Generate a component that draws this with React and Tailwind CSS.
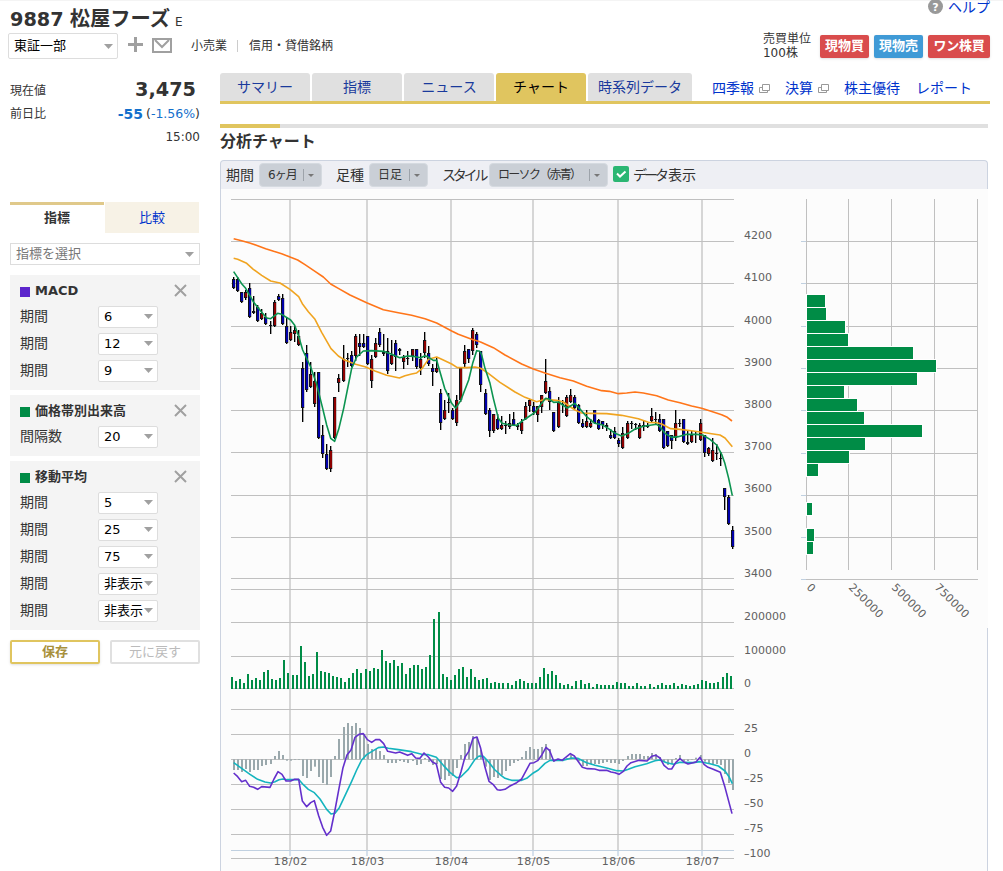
import React, { useState } from "react"

// [high, body top, body bottom, low, colour] in thirds of a pixel
const EARLY_CANDLES = [
    [247, 252, 280, 282, "b"], [247, 252, 287, 290, "b"], [290, 291, 321, 323, "b"], [284, 292, 309, 315, "r"],
    [265, 280, 366, 368, "b"], [303, 348, 355, 357, "r"], [331, 337, 378, 381, "b"], [343, 355, 373, 376, "r"],
    [355, 368, 388, 391, "b"], [378, 392, 394, 416, "k"], [316, 322, 394, 396, "r"], [297, 304, 316, 319, "b"],
    [297, 310, 387, 389, "b"], [367, 394, 444, 447, "b"], [394, 412, 435, 438, "r"], [394, 406, 417, 441, "r"],
    [406, 424, 450, 453, "r"], [501, 519, 640, 682, "b"], [451, 476, 588, 591, "b"], [501, 538, 576, 579, "r"],
    [531, 559, 628, 637, "r"], [531, 532, 730, 733, "b"], [691, 721, 778, 790, "b"], [747, 778, 822, 826, "b"],
    [754, 766, 822, 832, "r"], [606, 607, 730, 733, "r"], [538, 550, 564, 592, "r"], [451, 492, 559, 562, "r"],
    [475, 490, 493, 516, "k"], [469, 481, 514, 517, "b"], [418, 424, 483, 499, "r"], [418, 445, 457, 484, "b"],
    [418, 445, 457, 460, "b"], [423, 424, 507, 511, "b"], [481, 493, 559, 580, "r"], [430, 445, 486, 489, "r"],
    [400, 412, 450, 455, "b"], [418, 472, 478, 484, "r"], [430, 470, 531, 536, "b"], [435, 481, 508, 511, "r"],
    [436, 445, 486, 529, "b"], [460, 463, 468, 480, "b"], [480, 487, 501, 523, "r"], [468, 490, 493, 511, "k"],
    [462, 464, 486, 499, "r"], [462, 464, 519, 523, "b"], [475, 492, 519, 541, "r"], [412, 436, 475, 489, "r"],
    [452, 475, 508, 512, "b"], [507, 520, 531, 573, "b"], [487, 520, 531, 534, "r"], [583, 595, 685, 706, "b"],
    [616, 646, 673, 676, "r"], [595, 622, 626, 655, "b"], [640, 646, 673, 676, "b"], [600, 616, 685, 693, "r"],
    [519, 520, 616, 622, "r"], [451, 469, 508, 517, "r"], [462, 463, 493, 505, "b"], [400, 405, 468, 480, "r"],
    [412, 418, 450, 460, "b"], [468, 469, 570, 592, "b"],
]

const LATE_CANDLES = [
    [207, 219, 282, 285, "b"], [265, 270, 334, 352, "b"], [281, 283, 334, 340, "r"], [283, 298, 327, 330, "b"],
    [288, 316, 328, 331, "r"], [303, 315, 318, 343, "k"], [283, 310, 322, 327, "r"], [276, 298, 316, 319, "b"],
    [309, 316, 322, 330, "b"], [298, 307, 334, 343, "r"], [246, 259, 297, 300, "r"], [238, 241, 258, 276, "r"],
    [246, 258, 276, 285, "b"], [258, 260, 288, 307, "r"], [225, 227, 264, 279, "r"], [118, 184, 219, 222, "r"],
    [202, 214, 246, 270, "b"], [276, 277, 334, 335, "b"], [232, 246, 322, 324, "r"], [241, 252, 255, 280, "k"],
    [226, 231, 289, 291, "r"], [208, 226, 246, 249, "r"], [226, 231, 264, 268, "b"], [253, 255, 309, 312, "b"],
    [298, 310, 322, 325, "b"], [271, 304, 322, 325, "r"], [298, 310, 322, 324, "r"], [270, 271, 309, 312, "b"],
    [298, 300, 327, 330, "b"], [303, 304, 315, 327, "b"], [309, 316, 322, 333, "b"], [328, 346, 355, 357, "b"],
    [322, 334, 355, 357, "b"], [354, 361, 373, 382, "b"], [321, 340, 385, 387, "r"], [303, 310, 354, 357, "r"],
    [303, 309, 312, 327, "k"], [309, 312, 315, 330, "k"], [309, 316, 355, 357, "r"], [303, 316, 322, 333, "b"],
    [309, 316, 322, 325, "b"], [265, 289, 303, 306, "r"], [277, 297, 300, 315, "k"], [283, 298, 334, 336, "b"],
    [297, 298, 385, 387, "b"], [333, 334, 378, 382, "b"], [345, 347, 366, 388, "b"], [271, 310, 355, 364, "r"],
    [298, 309, 312, 320, "k"], [297, 298, 366, 369, "b"], [333, 367, 373, 376, "r"], [333, 346, 367, 369, "r"],
    [333, 342, 345, 370, "k"], [298, 310, 361, 364, "r"], [345, 347, 402, 411, "b"], [382, 385, 402, 408, "r"],
    [355, 391, 423, 426, "r"], [373, 399, 403, 421, "b"], [397, 415, 418, 439, "k"], [503, 505, 531, 571, "b"],
    [526, 532, 612, 615, "b"], [619, 631, 682, 686, "b"],
]

const CANDLES = [
    ...EARLY_CANDLES,
    ...LATE_CANDLES.map(([h, t, b, l, c]) => [h + 375, t + 375, b + 375, l + 375, c]),
]

// Bar ends of the volume chart, base line is 326
const VOLUME = [
    291, 303, 297, 309, 282, 300, 294, 300, 276, 270, 297, 300, 294, 240, 279, 285, 285, 198, 246, 288,
    282, 216, 273, 276, 279, 288, 291, 294, 306, 294, 279, 267, 279, 267, 273, 264, 267, 210, 243, 249,
    240, 258, 249, 282, 264, 255, 255, 267, 261, 225, 117, 96, 282, 291, 300, 285, 267, 261, 291, 267,
    291, 300, 297, 294, 309, 306, 309, 309, 309, 315, 303, 297, 303, 309, 309, 309, 291, 264, 282, 273,
    285, 309, 315, 312, 318, 303, 300, 312, 309, 321, 312, 315, 315, 315, 315, 306, 309, 309, 318, 318,
    309, 318, 318, 312, 321, 315, 309, 315, 315, 309, 318, 312, 315, 318, 315, 312, 300, 303, 309, 309,
    306, 291, 279, 288,
]

// Bar ends of the MACD histogram, zero line is 538
const HISTOGRAM = [
    570, 570, 576, 567, 576, 570, 570, 558, 555, 552, 528, 513, 525, 542, 542, 540, 540, 588, 594, 573,
    560, 591, 609, 615, 591, 528, 477, 441, 429, 438, 429, 444, 462, 492, 507, 507, 513, 525, 549, 549,
    549, 543, 546, 549, 543, 555, 552, 534, 546, 555, 552, 597, 600, 588, 588, 564, 525, 492, 486, 468,
    474, 510, 560, 600, 591, 594, 585, 573, 558, 549, 543, 531, 513, 501, 507, 507, 501, 492, 507, 545,
    541, 541, 534, 523, 534, 544, 558, 558, 552, 552, 552, 549, 546, 549, 549, 552, 543, 528, 522, 522,
    522, 528, 528, 519, 522, 531, 546, 555, 552, 534, 525, 543, 543, 540, 533, 525, 545, 549, 552, 552,
    555, 582, 609, 630,
]

const MA75 = {
    early: "26,131 50,137 74,144 98,152 122,161 146,169 170,176 197,187 218,195 240,209 270,229 295,246 317,267 340,280 375,300 425,323 475,344 520,353 560,361 600,371 635,384 680,408 700,418 740,433 765,440",
    late: "0,65 40,83 75,105 125,132 160,147 197,160 240,173 280,183 320,199 365,212 388,214 415,221 440,219 465,216 490,219 530,227 565,240 600,248 635,258 665,265 700,276 725,284 742,292 756,303",
}
const MA25 = {
    early: "26,190 38,193 65,205 85,223 110,241 137,258 165,264 195,283 221,305 232,326 250,350 270,373 290,412 318,461 340,483 357,494 392,508 420,515 450,528 485,541 523,549 540,542 560,537 575,534 590,522 610,493 635,486 650,493 680,507 697,518 725,518 750,516 765,519",
    late: "0,144 10,150 25,160 60,187 105,216 135,232 170,245 195,238 230,241 250,246 285,270 305,279 330,280 380,281 425,286 475,296 505,307 530,308 545,312 572,326 600,328 640,333 680,339 720,345 735,354 757,380",
}
const MA5 = {
    early: "26,230 50,266 62,280 86,322 110,352 125,369 137,371 158,355 170,358 197,375 209,391 221,424 233,465 257,516 275,568 293,640 305,690 317,730 329,739 341,703 356,640 380,520 395,486 415,468 440,467 476,469 500,478 524,488 548,483 563,484 587,488 600,482 611,487 625,496 635,496 659,580 680,625 692,640 707,617 731,555 743,505 755,467 765,469",
    late: "0,94 5,105 15,145 30,190 40,235 55,295 66,310 90,315 110,316 125,304 149,288 165,277 185,250 197,235 209,238 221,247 236,246 248,255 262,264 284,250 300,267 320,290 344,310 365,314 385,325 405,340 425,348 445,340 465,327 490,319 530,313 540,320 555,340 575,352 595,350 620,343 650,343 668,345 690,358 710,375 725,403 734,428 746,475 757,527",
}
const MACD = {
    early: "26,579 38,590 50,605 62,601 74,619 86,622 98,628 110,620 135,622 147,597 159,575 171,583 183,603 197,603 209,598 221,598 232,663 245,680 257,668 268,662 281,707 293,742 305,766 317,753 330,690 342,625 354,563 366,525 378,510 390,472 402,463 415,461 427,479 440,487 452,479 464,479 476,491 488,514 512,519 524,516 548,526 560,521 572,534 585,535 597,519 610,531 622,546 634,552 647,607 659,622 671,624 683,634 695,618 708,575 720,531 731,515 744,475 756,471 767,505 780,562 792,604 804,613 817,629 826,631",
    late: "0,631 15,628 30,618 50,608 65,597 90,550 102,548 113,542 126,524 138,502 149,512 161,543 174,537 186,541 211,521 223,528 247,562 262,566 284,567 297,571 320,571 333,576 345,578 357,583 370,574 381,558 393,548 417,541 441,543 455,529 468,526 480,534 492,556 505,567 515,567 527,548 540,536 552,546 564,552 588,546 600,532 612,553 624,562 636,566 661,577 675,622 696,701",
}
const SIGNAL = {
    early: "26,548 50,565 75,583 98,598 120,606 137,609 150,605 162,599 174,597 186,599 222,599 235,614 250,628 268,638 285,657 305,688 318,702 330,700 343,683 360,647 380,604 395,570 410,540 425,524 440,515 460,503 475,501 490,505 520,509 560,515 590,523 610,524 634,532 655,556 675,577 695,593 707,591 730,568 750,538 762,528 775,529 790,545 810,570 826,584",
    late: "0,584 15,595 35,601 65,601 80,595 100,579 115,570 135,550 150,541 190,541 215,534 233,535 260,548 285,556 320,564 350,572 370,573 385,568 405,560 440,551 465,542 480,540 500,548 520,553 540,547 580,548 600,545 630,551 655,558 675,573 687,590 697,611",
}

const GRID_Y = [199, 241, 283, 326, 368, 410, 452, 495, 537, 578, 589, 622, 656, 688, 709, 734, 759, 784, 809, 834, 858]
const MONTHS = [[290, "18/02"], [367, "18/03"], [451, "18/04"], [533, "18/05"], [618, "18/06"], [702, "18/07"]]
const Y_LABELS = [
    [239, "4200"], [281, "4100"], [324, "4000"], [366, "3900"], [408, "3800"], [450, "3700"], [492, "3600"],
    [535, "3500"], [577, "3400"], [620, "200000"], [654, "100000"], [687, "0"], [732, "25"], [757, "0"],
    [782, "–25"], [807, "–50"], [832, "–75"], [857, "–100"],
]
const PRICE_BANDS = [18, 19, 38, 41, 106, 129, 110, 37, 50, 57, 115, 58, 42, 11, 0, 0, 5, 0, 7, 6]

const CANDLE_COLORS = { b: "#0000a8", r: "#8c0000", k: "#000000" }

const candleX = (i) => 233 + Math.round(4.0568 * i + 0.003)
const volumeX = (i) => 231 + Math.round(4.0568 * i - 0.35)

const Curve = ({ line, color, top, lateX, lateTop }) => (
    <g fill="none" stroke={color} strokeWidth="4.8" strokeLinejoin="round">
        <polyline points={line.early} transform={`translate(225 ${top}) scale(0.33333)`} />
        <polyline points={line.late} transform={`translate(${lateX} ${lateTop}) scale(0.33333)`} />
    </g>
)

const Chart = () => (
    <svg className="block w-[768px] h-[682px] shrink-0" viewBox="220 189 768 682">
        <rect x="221" y="189" width="767" height="682" fill="#fcfcfc" />
        <path d="M220.5 189V871M987.5 628V871" stroke="#ccd3e0" />

        {/* Grid */}
        {MONTHS.map(([x]) => (
            <g key={x}>
                <rect x={x - 1} y="199" width="2" height="651" fill="#d6d6d6" />
                <rect x={x - 1} y="850" width="2" height="6" fill="#d5e0ec" />
            </g>
        ))}
        {GRID_Y.map((y) => (
            <rect key={y} x="231" y={y} width="503" height="1" fill="#c0c0c0" />
        ))}
        <rect x="231" y="850" width="503" height="1" fill="#c0d0e0" />

        {/* Candles */}
        <g shapeRendering="crispEdges">
            {CANDLES.map(([high, top, bottom, low, c], i) => {
                const x = candleX(i)
                const y = 195 + Math.floor(top / 3)
                const h = Math.max(1, Math.round((bottom - top) / 3))
                return (
                    <g key={i}>
                        <rect x={x} y={195 + high / 3} width="1" height={(low - high) / 3} fill="#000" />
                        <rect x={x + 1} y={195 + high / 3} width="1" height={(low - high) / 3} fill="#000" opacity="0.35" />
                        <rect x={x - 1} y={y} width="3" height={h} fill="#111118" />
                        <rect x={x + 2} y={y} width="1" height={h} fill="#000" opacity="0.2" />
                        {h > 2 && <rect x={x} y={y + 1} width="2" height={h - 2} fill={CANDLE_COLORS[c]} />}
                    </g>
                )
            })}
        </g>

        {/* Moving averages */}
        <Curve line={MA75} color="#ff7519" top={195} lateX={480} lateTop={320} />
        <Curve line={MA25} color="#f0a420" top={195} lateX={480} lateTop={320} />
        <Curve line={MA5} color="#0c9450" top={195} lateX={480} lateTop={320} />

        {/* Volume */}
        {VOLUME.map((v, i) => (
            <rect key={i} x={volumeX(i)} y={580 + v / 3} width="2" height={(327 - v) / 3} fill="#008c46" />
        ))}

        {/* MACD */}
        {HISTOGRAM.map((v, i) => (
            <rect key={i} x={candleX(i)} y={580 + Math.min(v, 538) / 3} width="2" height={Math.abs(v - 538) / 3} fill="#9aa8ac" />
        ))}
        <Curve line={SIGNAL} color="#14b4be" top={580} lateX={500} lateTop={580} />
        <Curve line={MACD} color="#6430cc" top={580} lateX={500} lateTop={580} />

        {/* Volume by price */}
        {[241, 283, 326, 368, 410, 453, 495, 537, 579].map((y) => (
            <g key={y}>
                <rect x="801" y={y} width="5" height="1" fill="#c0d0e0" />
                <rect x="806" y={y} width="172" height="1" fill="#c0c0c0" />
            </g>
        ))}
        {[806, 848, 891, 934, 977].map((x) => (
            <rect key={x} x={x} y="199" width="1" height="371" fill="#c0c0c0" />
        ))}
        {PRICE_BANDS.map((w, i) => w > 0 && (
            <g key={i}>
                <rect x="806" y={294 + i * 13} width={w + 2} height="14" fill="#fff" />
                <rect x="807" y={295 + i * 13} width={w} height="12" fill="#008c46" />
            </g>
        ))}

        <g fill="#606060" fontSize="11">
            {Y_LABELS.map(([y, label]) => (
                <text key={y} x="744" y={y}>{label}</text>
            ))}
            {MONTHS.map(([x, label]) => (
                <text key={label} x={x + 0.7} y="865" textAnchor="middle" letterSpacing="0.4">{label}</text>
            ))}
            {[[806, "0"], [848, "250000"], [891, "500000"], [934, "750000"]].map(([x, label]) => (
                <text key={x} transform={`translate(${x} 588) rotate(45)`} letterSpacing="0.25">{label}</text>
            ))}
        </g>
    </svg>
)

const Caret = ({ className = "" }) => (
    <svg className={`shrink-0 w-[9px] h-[5px] ${className}`} viewBox="0 0 9 5">
        <path d="M0 0h9L4.5 5z" fill="#a0a0a0" />
    </svg>
)

const WindowIcon = () => (
    <svg className="w-[12px] h-[10px] ml-[5px] mt-[1px]" viewBox="0 0 12 10" fill="none" stroke="#999">
        <path d="M3 3.5H0.5v5h8V7" />
        <path d="M3.5 0.5h7v6h-7z" />
    </svg>
)

const Indicator = ({ title, color, rows }) => (
    <div className="bg-[#f4f4f4] pt-[3px] pb-[6px] px-[10px] mb-[5px]">
        <div className="flex items-center h-[25px]">
            <span className={`w-[10px] h-[10px] mt-[2px] ${color}`}></span>
            <span className="ml-[5px] mt-[1px] font-bold text-[13px] leading-5">{title}</span>
            <svg className="w-[13px] h-[13px] ml-auto mr-[3px]" viewBox="0 0 13 13">
                <path d="M1 1l11 11M12 1L1 12" stroke="#a0a0a0" strokeWidth="2" />
            </svg>
        </div>
        {rows.map(([label, value], i) => (
            <div key={i} className="flex items-center h-[27px]">
                <span className="w-[78px] mb-[2px] text-[14px] leading-5">{label}</span>
                <div className="flex items-center w-[60px] h-[22px] bg-white border border-[#ddd] rounded-[2px] pl-[5px] text-black">
                    <span className="w-[40px] text-[13px] leading-5 whitespace-nowrap">{value}</span>
                    <Caret />
                </div>
            </div>
        ))}
    </div>
)

const ToolButton = ({ className, textClass, children }) => (
    <div className={`flex items-center h-[24px] rounded-[4px] border border-[#d5dae0] bg-[#cacfd6] ${className}`}>
        <span className={`text-[12px] leading-5 whitespace-nowrap ${textClass}`}>{children}</span>
        <span className="ml-auto w-px h-[12px] bg-[#9da3aa]"></span>
        <svg className="w-[6px] h-[3px] ml-[4px] mr-[7px]" viewBox="0 0 6 3">
            <path d="M0 0h6L3 3z" fill="#777" />
        </svg>
    </div>
)

const TABS = [
    ["サマリー", "w-[90px]"],
    ["指標", "w-[90px]"],
    ["ニュース", "w-[90px]"],
    ["チャート", "w-[90px]"],
    ["時系列データ", "w-[104px]"],
]

const App = () => {
    const [activeTab, setActiveTab] = useState("チャート")

    return (
        <div className="w-[1003px] h-[871px] overflow-hidden bg-white text-[#333] font-['DejaVu_Sans','Noto_Sans_CJK_JP',sans-serif]">
            {/* Header */}
            <div className="flex justify-between h-[73px] pl-[8px] pr-[13px] border-t border-[#f4f4f4]">
                <div>
                    <div className="flex items-baseline h-[32px] pl-[2px] font-bold leading-[36px] whitespace-nowrap">
                        <span className="text-[19.3px]">9887</span>
                        <span className="text-[20.3px] ml-[6px]">松屋フーズ</span>
                        <span className="text-[12px] ml-[5px] font-normal">E</span>
                    </div>
                    <div className="flex items-center h-[26px] text-[12px] leading-5">
                        <div className="flex items-center justify-between w-[110px] h-[26px] border border-[#ddd] rounded-[2px] pl-[5px] pr-[4px] text-[13px] text-black">
                            東証一部
                            <Caret />
                        </div>
                        <svg className="w-[15px] h-[15px] ml-[10px] mb-[3px]" viewBox="0 0 15 15">
                            <path d="M7.5 0v15M0 7.5h15" stroke="#a0a0a0" strokeWidth="3" />
                        </svg>
                        <svg className="w-[20px] h-[15px] ml-[9px] mb-[1px]" viewBox="0 0 20 15" fill="none" stroke="#a0a0a0" strokeWidth="2">
                            <path d="M1 1h18v13H1zM3 2l7 7 7-7" />
                        </svg>
                        <span className="ml-[19px]">小売業</span>
                        <span className="w-px h-[12px] bg-[#ccc] ml-[10px] mr-[11px]"></span>
                        <span>信用・貸借銘柄</span>
                    </div>
                </div>
                <div className="flex flex-col items-end">
                    <div className="flex items-center h-[12px] text-[14px] leading-4 text-[#0033cc]">
                        <svg className="w-[15px] h-[15px] mr-[5px] mb-[1px]" viewBox="0 0 15 15">
                            <circle cx="7.5" cy="7.5" r="7.5" fill="#999" />
                            <text x="7.5" y="11.5" textAnchor="middle" fontSize="11" fontWeight="bold" fill="#fff">?</text>
                        </svg>
                        ヘルプ
                    </div>
                    <div className="flex items-center mt-[19px] h-[28px]">
                        <div className="text-[12px] leading-[14px] mr-[9px]">
                            <div>売買単位</div>
                            <div>100株</div>
                        </div>
                        <div className="flex gap-[5px] text-white font-bold text-[13px] leading-[22px] text-center whitespace-nowrap">
                            <div className="w-[49px] h-[23px] bg-[#d94c4c] rounded-[2px] shadow-sm">現物買</div>
                            <div className="w-[49px] h-[23px] bg-[#3f9ad6] rounded-[2px] shadow-sm">現物売</div>
                            <div className="w-[62px] h-[23px] bg-[#d94c4c] rounded-[2px] shadow-sm tracking-[-0.3px]">ワン株買</div>
                        </div>
                    </div>
                </div>
            </div>

            <div className="flex">
                {/* Sidebar */}
                <div className="w-[190px] ml-[10px] shrink-0 pt-[5px]">
                    <div className="flex items-center justify-between h-[25px] text-[12px]">
                        <span>現在値</span>
                        <span className="text-[19.3px] font-bold mr-[4px]">3,475</span>
                    </div>
                    <div className="flex items-center h-[23px] text-[12px] whitespace-nowrap">
                        <span className="mb-[2px]">前日比</span>
                        <span className="ml-auto text-[14px] font-bold text-[#1470cc]">-55</span>
                        <span className="ml-[3px] text-[12.5px]">(<span className="text-[#1470cc]">-1.56%</span>)</span>
                    </div>
                    <div className="h-[23px] text-[12px] leading-[22px] text-right">15:00</div>

                    <div className="flex gap-px mt-[53px] h-[31px] text-[13px] text-center">
                        <div className="w-[94px] border-t-[3px] border-[#e0c98a] font-bold leading-[26px]">指標</div>
                        <div className="w-[94px] bg-[#f7f2e6] text-[#0033cc] leading-[31px]">比較</div>
                    </div>

                    <div className="flex items-center justify-between h-[22px] mt-[10px] mb-[10px] border border-[#ddd] pl-[5px] pr-[5px] text-[13px] leading-5 text-[#777]">
                        指標を選択
                        <Caret />
                    </div>

                    <Indicator title="MACD" color="bg-[#5c26cc]" rows={[["期間", "6"], ["期間", "12"], ["期間", "9"]]} />
                    <Indicator title="価格帯別出来高" color="bg-[#008c46]" rows={[["間隔数", "20"]]} />
                    <Indicator
                        title="移動平均"
                        color="bg-[#008c46]"
                        rows={[["期間", "5"], ["期間", "25"], ["期間", "75"], ["期間", "非表示"], ["期間", "非表示"]]}
                    />

                    <div className="flex gap-[10px] mt-[10px] text-[13px] leading-[18px] text-center">
                        <button className="w-[90px] h-[24px] border-2 border-[#e0c55f] rounded-[2px] shadow-sm font-bold text-[#a8903c]">保存</button>
                        <button className="w-[90px] h-[24px] border-2 border-[#e0e0e0] rounded-[2px] text-[#bbb]">元に戻す</button>
                    </div>
                </div>

                {/* Main column */}
                <div className="ml-[20px] w-[770px] shrink-0">
                    <div className="flex items-start h-[31px] border-b-[3px] border-[#e0c55f] text-[14px] whitespace-nowrap">
                        <div className="flex gap-[2px]">
                            {TABS.map(([label, width]) => (
                                <button
                                    key={label}
                                    onClick={() => setActiveTab(label)}
                                    className={`${width} h-[28px] leading-[27px] rounded-t-[3px] text-center ${activeTab === label ? "bg-[#e0c55f] text-black" : "bg-[#e0e0e0] text-[#1a3a9c]"}`}
                                >
                                    {label}
                                </button>
                            ))}
                        </div>
                        <div className="flex items-center h-[30px] ml-[20px] text-[#0033cc]">
                            <span>四季報</span>
                            <WindowIcon />
                            <span className="ml-[14px]">決算</span>
                            <WindowIcon />
                            <span className="ml-[14px]">株主優待</span>
                            <span className="ml-[16px]">レポート</span>
                        </div>
                    </div>

                    <div className="w-[768px] h-[4px] mt-[20px] bg-[#e0e0e0]">
                        <div className="w-[60px] h-[4px] bg-[#e0c55f]"></div>
                    </div>
                    <h2 className="h-[32px] text-[16px] leading-[28px] font-bold">分析チャート</h2>

                    <div className="w-[768px]">
                        <div className="flex items-center h-[29px] pl-[5px] border-t border-x border-[#ccd3e0] rounded-t-[4px] bg-[#eeeff4] text-[14px] leading-5 whitespace-nowrap">
                            <span className="w-[33px]">期間</span>
                            <ToolButton className="w-[63px]" textClass="pl-[8px] tracking-[-1px]">6ヶ月</ToolButton>
                            <span className="w-[33px] ml-[14px]">足種</span>
                            <ToolButton className="w-[59px]" textClass="pl-[8px]">日足</ToolButton>
                            <span className="w-[47px] ml-[14px] tracking-[-3.2px]">スタイル</span>
                            <ToolButton className="w-[119px]" textClass="pl-[8px] tracking-[-1.7px]">ローソク（赤青）</ToolButton>
                            <svg className="w-[16px] h-[16px] ml-[5px] mb-[2px]" viewBox="0 0 16 16">
                                <rect width="16" height="16" rx="2" fill="#2bb673" />
                                <path d="M4 7.5l3 3 5.5-5" fill="none" stroke="#fff" strokeWidth="2" />
                            </svg>
                            <span className="ml-[4px]"><span className="tracking-[-3px] mr-[2px]">データ</span>表示</span>
                        </div>
                        <Chart />
                    </div>
                </div>
            </div>
        </div>
    )
}

export default App
